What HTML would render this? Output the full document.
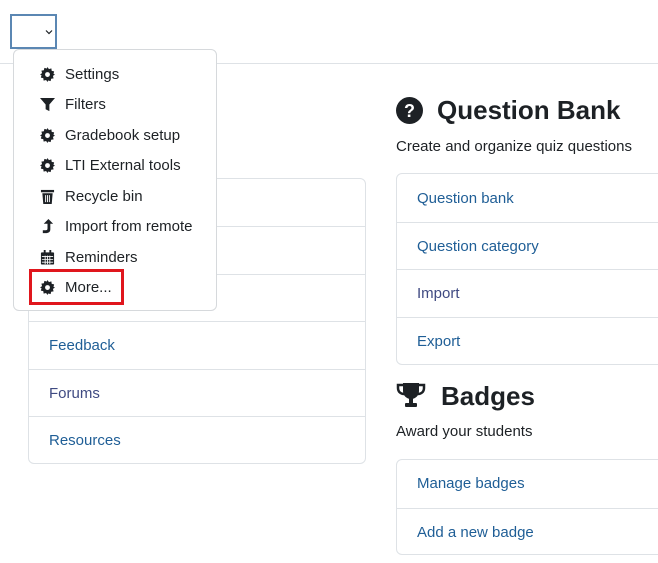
<!DOCTYPE html>
<html><head><meta charset="utf-8"><style>
*{box-sizing:border-box;margin:0;padding:0}
body{width:658px;height:563px;overflow:hidden;background:#fff;font-family:"Liberation Sans",sans-serif;color:#1d2125;position:relative;font-size:15px}
.topline{position:absolute;left:0;top:63px;width:658px;height:1px;background:#dee2e6}
.sel{position:absolute;left:10px;top:14px;width:47px;height:35px;border:2px solid #5b87b3;background:#fff}
.sel svg{position:absolute;left:33px;top:13px}
.card{position:absolute;border:1px solid #dee2e6;border-radius:6px;background:#fff;overflow:hidden}
.row{position:absolute;left:0;right:0;border-top:1px solid #dee2e6;color:#1f5e96;padding-left:20px}
.row.v{color:#3f4a82}
.row.first{border-top:none}
.menu{position:absolute;left:13px;top:49px;width:204px;height:262px;border:1px solid #d6d9dc;border-radius:6px;background:#fff}
.item{position:absolute;left:0;width:100%;height:30px;line-height:30px;padding-left:51px;color:#1d2125}
.item svg{position:absolute;left:26px;top:7px}
.red{position:absolute;left:29px;top:269px;width:95px;height:36px;border:3px solid #e0161d}
h2{position:absolute;font-size:26px;font-weight:bold;color:#1d2125}
.desc{position:absolute;font-size:15px}
</style></head><body>
<div class="topline"></div>
<div class="sel"><svg width="8" height="6" viewBox="0 0 8 6"><path d="M1 1.5L4 4.5L7 1.5" stroke="#1d2125" stroke-width="1.2" fill="none"/></svg></div>

<div class="card" style="left:28px;top:178px;width:338px;height:286px">
<div class="row first" style="top:0;height:48px"></div>
<div class="row" style="top:47px;height:48px"></div>
<div class="row" style="top:95px;height:48px"></div>
<div class="row" style="top:142px;height:48px;line-height:47px">Feedback</div>
<div class="row v" style="top:190px;height:48px;line-height:47px">Forums</div>
<div class="row" style="top:237px;height:48px;line-height:47px">Resources</div>
</div>

<svg style="position:absolute;left:396px;top:97px" width="27" height="27" viewBox="0 0 27 27"><circle cx="13.5" cy="13.5" r="13.5" fill="#1d2125"/><text x="13.5" y="20" text-anchor="middle" font-family="Liberation Sans" font-weight="bold" font-size="18" fill="#fff">?</text></svg>
<h2 style="left:437px;top:95px">Question Bank</h2>
<div class="desc" style="left:396px;top:138px">Create and organize quiz questions</div>
<div class="card" style="left:396px;top:173px;width:280px;height:192px">
<div class="row first" style="top:0;height:48px;line-height:49px">Question bank</div>
<div class="row" style="top:48px;height:48px;line-height:47px">Question category</div>
<div class="row v" style="top:95px;height:48px;line-height:47px">Import</div>
<div class="row" style="top:143px;height:48px;line-height:47px">Export</div>
</div>

<svg style="position:absolute;left:396px;top:382px" width="30" height="26" viewBox="0 0 30 26"><path d="M7 1H23V9C23 14 19 17 15 17C11 17 7 14 7 9Z" fill="#1d2125"/><path d="M7 3H2V6C2 10 5 12 8 12M23 3H28V6C28 10 25 12 22 12" stroke="#1d2125" stroke-width="2.5" fill="none"/><rect x="13" y="16" width="4" height="5" fill="#1d2125"/><rect x="9" y="21" width="12" height="4" rx="1" fill="#1d2125"/></svg>
<h2 style="left:441px;top:381px">Badges</h2>
<div class="desc" style="left:396px;top:423px">Award your students</div>
<div class="card" style="left:396px;top:459px;width:280px;height:96px">
<div class="row first" style="top:0;height:48px;line-height:48px">Manage badges</div>
<div class="row" style="top:48px;height:48px;line-height:47px">Add a new badge</div>
</div>

<div class="menu">
<div class="item" style="top:10px"><svg width="15" height="15" viewBox="0 0 16 16"><path d="M8 0l1.5 2.2 2.6-.7.4 2.6 2.6.6-.7 2.6L16 8l-2.2 1.5.7 2.6-2.6.4-.6 2.6-2.6-.7L8 16l-1.5-2.2-2.6.7-.4-2.6-2.6-.6.7-2.6L0 8l2.2-1.5-.7-2.6 2.6-.4.6-2.6 2.6.7z" fill="#1d2125"/><circle cx="8" cy="8" r="2.6" fill="#fff"/></svg>Settings</div>
<div class="item" style="top:40px"><svg width="15" height="15" viewBox="0 0 16 16"><path d="M0 1H16L10 8V15L6 13V8Z" fill="#1d2125"/></svg>Filters</div>
<div class="item" style="top:71px"><svg width="15" height="15" viewBox="0 0 16 16"><path d="M8 0l1.5 2.2 2.6-.7.4 2.6 2.6.6-.7 2.6L16 8l-2.2 1.5.7 2.6-2.6.4-.6 2.6-2.6-.7L8 16l-1.5-2.2-2.6.7-.4-2.6-2.6-.6.7-2.6L0 8l2.2-1.5-.7-2.6 2.6-.4.6-2.6 2.6.7z" fill="#1d2125"/><circle cx="8" cy="8" r="2.6" fill="#fff"/></svg>Gradebook setup</div>
<div class="item" style="top:101px"><svg width="15" height="15" viewBox="0 0 16 16"><path d="M8 0l1.5 2.2 2.6-.7.4 2.6 2.6.6-.7 2.6L16 8l-2.2 1.5.7 2.6-2.6.4-.6 2.6-2.6-.7L8 16l-1.5-2.2-2.6.7-.4-2.6-2.6-.6.7-2.6L0 8l2.2-1.5-.7-2.6 2.6-.4.6-2.6 2.6.7z" fill="#1d2125"/><circle cx="8" cy="8" r="2.6" fill="#fff"/></svg>LTI External tools</div>
<div class="item" style="top:132px"><svg width="15" height="15" viewBox="0 0 16 16"><rect x="1" y="1" width="14" height="2.5" fill="#1d2125"/><path d="M2.5 4.5H13.5L12.5 16H3.5Z" fill="#1d2125"/><path d="M6 6.5V14M8 6.5V14M10 6.5V14" stroke="#fff" stroke-width="1"/></svg>Recycle bin</div>
<div class="item" style="top:162px"><svg width="15" height="15" viewBox="0 0 16 16"><path d="M9 0L14 5H11V11C11 14 9 15 6 15H3V12H6C7.5 12 8 11.5 8 10V5H4Z" fill="#1d2125"/></svg>Import from remote</div>
<div class="item" style="top:193px"><svg width="15" height="15" viewBox="0 0 16 16"><rect x="1" y="2.5" width="14" height="13" rx="1" fill="#1d2125"/><rect x="4" y="0" width="2" height="4" fill="#1d2125"/><rect x="10" y="0" width="2" height="4" fill="#1d2125"/><path d="M2 7H14M2 10H14M2 13H14M5.5 6V15M8 6V15M10.5 6V15" stroke="#fff" stroke-width=".9"/></svg>Reminders</div>
<div class="item" style="top:223px"><svg width="15" height="15" viewBox="0 0 16 16"><path d="M8 0l1.5 2.2 2.6-.7.4 2.6 2.6.6-.7 2.6L16 8l-2.2 1.5.7 2.6-2.6.4-.6 2.6-2.6-.7L8 16l-1.5-2.2-2.6.7-.4-2.6-2.6-.6.7-2.6L0 8l2.2-1.5-.7-2.6 2.6-.4.6-2.6 2.6.7z" fill="#1d2125"/><circle cx="8" cy="8" r="2.6" fill="#fff"/></svg>More...</div>
</div>
<div class="red"></div>
</body></html>
